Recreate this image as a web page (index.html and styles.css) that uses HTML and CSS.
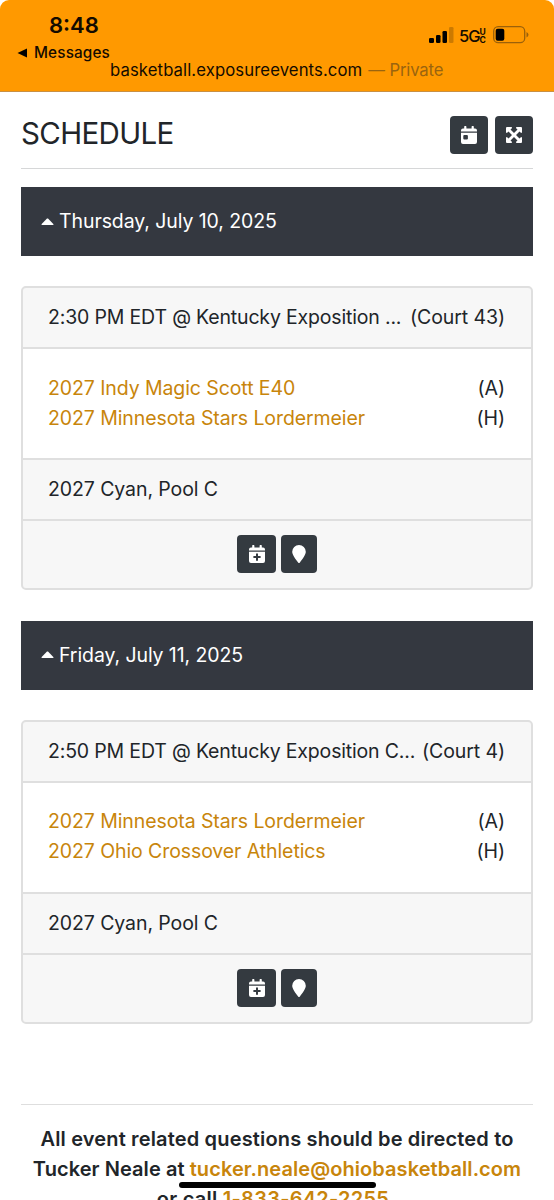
FILE: index.html
```html
<!DOCTYPE html>
<html lang="en">
<head>
<meta charset="utf-8">
<title>Schedule</title>
<link rel="stylesheet" href="styles.css">
</head>
<body>
<svg class="defs" width="0" height="0">
  <symbol id="cal" viewBox="0 0 16 18"><path d="M3.2 1a1 1 0 0 1 2.2 0v1.500h5.200V1a1 1 0 0 1 2.200 0v1.500H14a2 2 0 0 1 2 2V5.500H0V4.500a2 2 0 0 1 2-2h1.200z"/><path fill-rule="evenodd" d="M0 6.700h16V16a2 2 0 0 1-2 2H2a2 2 0 0 1-2-2zM3.300 8.900a1 1 0 0 0-1 1v2.600a1 1 0 0 0 1 1h2.600a1 1 0 0 0 1-1V9.900a1 1 0 0 0-1-1z"/></symbol>
  <symbol id="plus" viewBox="0 0 16 18"><path d="M3.200 1a1 1 0 0 1 2.200 0v1.500h5.200V1a1 1 0 0 1 2.200 0v1.500H14a2 2 0 0 1 2 2V5.500H0V4.500a2 2 0 0 1 2-2h1.200z"/><path fill-rule="evenodd" d="M0 6.700h16V16a2 2 0 0 1-2 2H2a2 2 0 0 1-2-2zM7 8.500v2.600H4.400v2H7v2.600h2v-2.600h2.600v-2H9V8.500z"/></symbol>
  <symbol id="expand" viewBox="0 0 16 16"><path d="M1 0h4.600l.5.900-1.600 1.600L8 6l3.500-3.500L9.900.9l.5-.9H15a1 1 0 0 1 1 1v4.600l-.9.500-1.600-1.600L10 8l3.500 3.500 1.600-1.600.9.500V15a1 1 0 0 1-1 1h-4.600l-.5-.9 1.600-1.600L8 10l-3.500 3.500 1.600 1.600-.5.900H1a1 1 0 0 1-1-1v-4.600l.9-.5 1.600 1.600L6 8 2.500 4.500.9 6.100 0 5.600V1a1 1 0 0 1 1-1z"/></symbol>
  <symbol id="pin" viewBox="0 0 14 18"><path d="M7 0a6.800 6.800 0 0 1 6.800 6.800c0 3-3.800 8-5.900 10.700a1.100 1.100 0 0 1-1.800 0C4 14.800.2 9.800.2 6.800A6.800 6.800 0 0 1 7 0z"/></symbol>
</svg>
<header class="browser">
  <div class="time">8:48</div>
  <div class="back"><svg width="11" height="10" viewBox="0 0 11 10"><path d="M.5 5 10 .4v9.200z"/></svg><span>Messages</span></div>
  <div class="url"><span class="host">basketball.exposureevents.com</span><span class="private">— Private</span></div>
  <div class="status">
    <svg width="25" height="17" viewBox="0 0 25 17"><rect y="11" width="5" height="5" rx="1.300"/><rect x="7" y="8" width="4.500" height="8" rx="1.300"/><rect x="13.500" y="4" width="4.500" height="12" rx="1.300"/><rect x="20" y="0" width="4.500" height="16" rx="1.300" opacity=".2"/></svg>
    <span class="net">5G</span><span class="uc"><i>U</i><i>C</i></span>
    <svg class="battery" width="36" height="18" viewBox="0 0 36 18"><rect x=".7" y=".7" width="31" height="16" rx="4.500" fill="none" stroke="#9b610a" stroke-width="1.300"/><rect x="2.700" y="2.700" width="8.600" height="12" rx="2"/><path d="M33.500 6v5.500q2-1 2-2.750T33.500 6z" fill="#9b610a"/></svg>
  </div>
</header>
<main>
  <div class="title"><h1>SCHEDULE</h1><div class="tools"><a class="btn"><svg width="16" height="18"><use href="#cal"/></svg></a><a class="btn"><svg width="16" height="16"><use href="#expand"/></svg></a></div></div>
  <section>
    <h2 class="day"><svg width="13" height="7" viewBox="0 0 13 7"><path d="M1 7Q0 7 .7 6L6 .6q.5-.4 1 0L12.300 6q.7 1-.3 1z"/></svg><span>Thursday, July 10, 2025</span></h2>
    <article class="card">
      <div class="row head"><span class="place">2:30 PM EDT @ Kentucky Exposition ...</span><span>(Court 43)</span></div>
      <div class="teams">
        <div class="team"><a>2027 Indy Magic Scott E40</a><span>(A)</span></div>
        <div class="team"><a>2027 Minnesota Stars Lordermeier</a><span>(H)</span></div>
      </div>
      <div class="row pool"><span>2027 Cyan, Pool C</span></div>
      <div class="actions"><a class="btn"><svg width="16" height="18"><use href="#plus"/></svg></a><a class="btn map"><svg width="14" height="18"><use href="#pin"/></svg></a></div>
    </article>
  </section>
  <section>
    <h2 class="day"><svg width="13" height="7" viewBox="0 0 13 7"><path d="M1 7Q0 7 .7 6L6 .6q.5-.4 1 0L12.300 6q.7 1-.3 1z"/></svg><span>Friday, July 11, 2025</span></h2>
    <article class="card">
      <div class="row head"><span class="place">2:50 PM EDT @ Kentucky Exposition C...</span><span>(Court 4)</span></div>
      <div class="teams">
        <div class="team"><a>2027 Minnesota Stars Lordermeier</a><span>(A)</span></div>
        <div class="team"><a>2027 Ohio Crossover Athletics</a><span>(H)</span></div>
      </div>
      <div class="row pool"><span>2027 Cyan, Pool C</span></div>
      <div class="actions"><a class="btn"><svg width="16" height="18"><use href="#plus"/></svg></a><a class="btn map"><svg width="14" height="18"><use href="#pin"/></svg></a></div>
    </article>
  </section>
  <footer class="contact">
    <div class="c1">All event related questions should be directed to</div>
    <div class="c2">Tucker Neale at <a>tucker.neale@ohiobasketball.com</a></div>
    <div class="c3">or call <a>1-833-642-2255</a></div>
  </footer>
</main>
<div class="home"></div>
</body>
</html>
```
FILE: styles.css
```css
* { box-sizing: border-box; }
html, body { height: 1200px; overflow: hidden; }
body { margin: 0; background: #fff; color: #212529; font: 400 19.5px/30px Inter, "Liberation Sans", sans-serif; letter-spacing: -.09px; white-space: nowrap; }
.defs { position: absolute; }
svg { display: block; flex: none; }
.browser { display: grid; grid-template-columns: 110px 1fr; grid-template-rows: 45px 16px 30px; height: 92px; background: #ff9900; border-bottom: 1px solid #c99043; border-radius: 9px 9px 0 0; color: #130b00; }
.time { grid-area: 1 / 1; padding: 10px 0 0 49px; font-size: 22px; font-weight: 600; line-height: 30px; letter-spacing: 0; }
.back { grid-area: 2 / 1; display: flex; align-items: center; gap: 6px; padding-left: 17px; font-size: 15.3px; font-weight: 500; line-height: 18px; letter-spacing: .15px; }
.status { grid-area: 1 / 2; display: flex; padding: 27px 0 0 319px; fill: #000; }
.net { margin-left: 5px; font-size: 16.5px; font-weight: 500; line-height: 18px; letter-spacing: -1px; }
.uc { display: flex; flex-direction: column; width: 8px; margin-left: 0; padding-top: 1px; font-size: 8.500px; font-weight: 700; line-height: 8px; }
.uc i { font-style: normal; }
.battery { margin: -1px 0 0 5px; }
.url { grid-area: 3 / 1 / 4 / 3; padding-left: 110px; font-size: 16.700px; line-height: 19px; letter-spacing: .1px; }
.private { margin-left: 6px; color: #9a640f; letter-spacing: -.15px; }
main { padding: 0 21px; }
.title { display: flex; justify-content: space-between; height: 77px; border-bottom: 1px solid #d6d7d8; margin-bottom: 18px; padding-top: 24px; }
h1 { margin: 0; font-size: 29.500px; font-weight: 400; line-height: 34px; letter-spacing: -.65px; }
.tools { display: flex; gap: 7px; }
.btn { display: flex; align-items: center; justify-content: center; width: 38px; height: 38px; border-radius: 4px; background: #343a40; fill: #fff; }
.map { width: 36px; }
.day { display: flex; align-items: center; gap: 5px; height: 69px; margin: 0 0 30px; padding: 0 0 1px 20px; background: #343840; color: #fff; fill: #fff; font-size: 19.500px; font-weight: 400; }
.card { height: 304px; margin-bottom: 30.5px; border: 2px solid #dfdfdf; border-radius: 5px; background: #f7f7f7; overflow: hidden; }
.row { display: flex; align-items: center; justify-content: space-between; height: 61px; padding: 0 26px 1px 25px; border-bottom: 2px solid #dfdfdf; }
.place { letter-spacing: -.17px; }
.teams { height: 111px; padding: 23.9px 26px 0 25px; border-bottom: 2px solid #dfdfdf; background: #fff; }
.team { display: flex; justify-content: space-between; }
a { color: #c8850b; }
.actions { display: flex; justify-content: center; gap: 5px; padding-top: 14px; }
.actions .btn:first-child { width: 38.5px; }
.contact { margin-top: 80px; border-top: 1px solid #dedede; padding-top: 19px; text-align: center; font-weight: 600; font-size: 20px; }
.c1 { letter-spacing: .16px; }
.c2 { letter-spacing: .07px; }
.c3 { padding-right: 8px; letter-spacing: .25px; }
.home { position: absolute; left: 179px; top: 1182px; width: 197px; height: 6px; border-radius: 3px; background: #000; }
```
